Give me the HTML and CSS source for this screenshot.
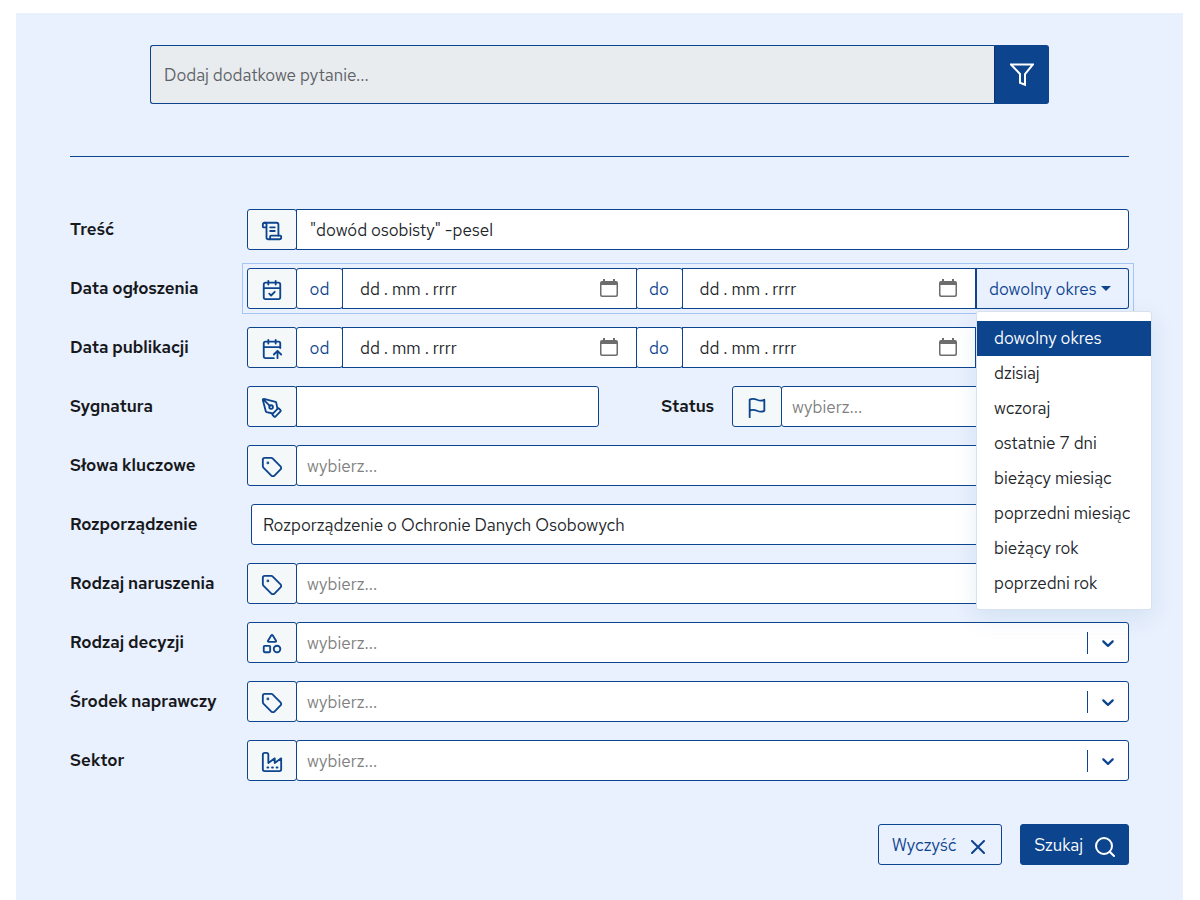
FILE: index.html
```
<!DOCTYPE html>
<html lang="pl">
<head>
<meta charset="utf-8">
<meta name="viewport" content="width=device-width, initial-scale=1">
<title>Wyszukiwarka</title>
<link rel="stylesheet" href="styles.css">
</head>
<body>

<svg class="sprite" aria-hidden="true">
	<symbol id="i-tag" viewBox="0 0 24 24">
		<path d="M12.6 2.6A2 2 0 0 0 11.2 2H4a2 2 0 0 0-2 2v7.2a2 2 0 0 0 .6 1.4l8.7 8.7a2.4 2.4 0 0 0 3.4 0l6.6-6.6a2.4 2.4 0 0 0 0-3.4z"/>
		<circle cx="7.5" cy="7.5" r=".5" fill="currentColor"/>
	</symbol>
	<symbol id="i-cal" viewBox="0 0 18 18">
		<path fill="currentColor" d="M3 0h2v2h8V0h2v2h1a2 2 0 0 1 2 2v12a2 2 0 0 1-2 2H2a2 2 0 0 1-2-2V4a2 2 0 0 1 2-2h1zM1.500 6v9.500a1 1 0 0 0 1 1h13a1 1 0 0 0 1-1V6z"/>
	</symbol>
	<symbol id="i-down" viewBox="0 0 20 20">
		<path fill="currentColor" d="M4.516 7.548c0.436-0.446 1.043-0.481 1.576 0l3.908 3.747 3.908-3.747c0.533-0.481 1.141-0.446 1.574 0 0.436 0.445 0.408 1.197 0 1.615-0.406 0.418-4.695 4.502-4.695 4.502-0.217 0.223-0.502 0.335-0.787 0.335s-0.570-0.112-0.789-0.335c0 0-4.287-4.084-4.695-4.502s-0.436-1.170 0-1.615z"/>
	</symbol>
</svg>

<main class="panel">
<form>
	<div class="ask">
		<input class="ask-input" type="text" placeholder="Dodaj dodatkowe pytanie..." aria-label="Dodatkowe pytanie" disabled>
		<button class="ask-btn" type="button" aria-label="Filtruj">
			<svg viewBox="0 0 24 24"><path d="M1 1.500h22L15 11v10.800l-5-2V11z"/></svg>
		</button>
	</div>

	<hr class="line">

	<div class="row">
		<label class="name" for="tresc">Treść</label>
		<div class="group">
			<span class="addon"><svg viewBox="0 0 24 24"><path d="M15 12h-5M15 8h-5M19 17V5a2 2 0 0 0-2-2H4"/><path d="M8 21h12a2 2 0 0 0 2-2v-1a1 1 0 0 0-1-1H11a1 1 0 0 0-1 1v1a2 2 0 1 1-4 0V5a2 2 0 1 0-4 0v2a1 1 0 0 0 1 1h3"/></svg></span>
			<input class="field" id="tresc" type="text" value="&quot;dowód osobisty&quot; -pesel">
		</div>
	</div>

	<div class="row">
		<span class="name" id="ogl">Data ogłoszenia</span>
		<div class="group active" role="group" aria-labelledby="ogl">
			<span class="addon"><svg viewBox="0 0 24 24"><path d="M8 2v4M16 2v4M3 10h18M9 16l2 2 4-4"/><rect x="3" y="4" width="18" height="18" rx="2"/></svg></span>
			<label class="prefix" for="ogl-od">od</label>
			<div class="date">
				<input id="ogl-od" type="text" placeholder="dd . mm . rrrr">
				<button type="button" aria-label="Wybierz datę"><svg><use href="#i-cal"/></svg></button>
			</div>
			<label class="prefix" for="ogl-do">do</label>
			<div class="date">
				<input id="ogl-do" type="text" placeholder="dd . mm . rrrr">
				<button type="button" aria-label="Wybierz datę"><svg><use href="#i-cal"/></svg></button>
			</div>
			<div class="period">
				<button class="period-btn" type="button" aria-expanded="true">dowolny okres</button>
				<div class="menu">
					<button class="item selected" type="button">dowolny okres</button>
					<button class="item" type="button">dzisiaj</button>
					<button class="item" type="button">wczoraj</button>
					<button class="item" type="button">ostatnie 7 dni</button>
					<button class="item" type="button">bieżący miesiąc</button>
					<button class="item" type="button">poprzedni miesiąc</button>
					<button class="item" type="button">bieżący rok</button>
					<button class="item" type="button">poprzedni rok</button>
				</div>
			</div>
		</div>
	</div>

	<div class="row">
		<span class="name" id="pub">Data publikacji</span>
		<div class="group" role="group" aria-labelledby="pub">
			<span class="addon"><svg viewBox="0 0 24 24"><path d="M8 2v4M16 2v4M3 10h18M18 22v-8M14 18l4-4 4 4"/><path d="M21 11V6a2 2 0 0 0-2-2H5a2 2 0 0 0-2 2v14a2 2 0 0 0 2 2h9"/></svg></span>
			<label class="prefix" for="pub-od">od</label>
			<div class="date">
				<input id="pub-od" type="text" placeholder="dd . mm . rrrr">
				<button type="button" aria-label="Wybierz datę"><svg><use href="#i-cal"/></svg></button>
			</div>
			<label class="prefix" for="pub-do">do</label>
			<div class="date">
				<input id="pub-do" type="text" placeholder="dd . mm . rrrr">
				<button type="button" aria-label="Wybierz datę"><svg><use href="#i-cal"/></svg></button>
			</div>
			<div class="period">
				<button class="period-btn" type="button" aria-expanded="false" aria-label="Okres publikacji"></button>
			</div>
		</div>
	</div>

	<div class="row">
		<label class="name" for="sygn">Sygnatura</label>
		<div class="group short">
			<span class="addon"><svg viewBox="0 0 24 24"><path d="M15.700 21.300a1 1 0 0 1-1.400 0l-1.600-1.600a1 1 0 0 1 0-1.400l5.600-5.600a1 1 0 0 1 1.400 0l1.600 1.600a1 1 0 0 1 0 1.400z"/><path d="M18 13l-1.400-6.900a1 1 0 0 0-.7-.8L3.200 2a1 1 0 0 0-1.200 1.200l3.300 12.700a1 1 0 0 0 .8.700L13 18M2.300 2.300l7.300 7.300"/><circle cx="11" cy="11" r="2"/></svg></span>
			<input class="field" id="sygn" type="text">
		</div>
		<label class="name status" for="status">Status</label>
		<div class="group">
			<span class="addon"><svg viewBox="0 0 24 24"><path d="M4 15s1-1 4-1 5 2 8 2 4-1 4-1V3s-1 1-4 1-5-2-8-2-4 1-4 1zM4 22v-7"/></svg></span>
			<div class="select">
				<select id="status"><option>wybierz...</option></select>
				<span class="arrow"><svg><use href="#i-down"/></svg></span>
			</div>
		</div>
	</div>

	<div class="row">
		<label class="name" for="slowa">Słowa kluczowe</label>
		<div class="group">
			<span class="addon"><svg><use href="#i-tag"/></svg></span>
			<div class="select">
				<select id="slowa"><option>wybierz...</option></select>
				<span class="arrow"><svg><use href="#i-down"/></svg></span>
			</div>
		</div>
	</div>

	<div class="row">
		<label class="name" for="rozp">Rozporządzenie</label>
		<div class="group alone">
			<div class="select filled">
				<select id="rozp"><option>Rozporządzenie o Ochronie Danych Osobowych</option></select>
			</div>
		</div>
	</div>

	<div class="row">
		<label class="name" for="narusz">Rodzaj naruszenia</label>
		<div class="group">
			<span class="addon"><svg><use href="#i-tag"/></svg></span>
			<div class="select">
				<select id="narusz"><option>wybierz...</option></select>
				<span class="arrow"><svg><use href="#i-down"/></svg></span>
			</div>
		</div>
	</div>

	<div class="row">
		<label class="name" for="decyzja">Rodzaj decyzji</label>
		<div class="group">
			<span class="addon"><svg viewBox="0 0 24 24"><path d="M11.300 2.500a.8.8 0 0 1 1.400 0l3.700 6a.8.8 0 0 1-.7 1.200H8.300a.8.8 0 0 1-.7-1.200z"/><rect x="3" y="14" width="7" height="7" rx="1"/><circle cx="17.500" cy="17.500" r="3.600"/></svg></span>
			<div class="select">
				<select id="decyzja"><option>wybierz...</option></select>
				<span class="arrow"><svg><use href="#i-down"/></svg></span>
			</div>
		</div>
	</div>

	<div class="row">
		<label class="name" for="srodek">Środek naprawczy</label>
		<div class="group">
			<span class="addon"><svg><use href="#i-tag"/></svg></span>
			<div class="select">
				<select id="srodek"><option>wybierz...</option></select>
				<span class="arrow"><svg><use href="#i-down"/></svg></span>
			</div>
		</div>
	</div>

	<div class="row">
		<label class="name" for="sektor">Sektor</label>
		<div class="group">
			<span class="addon"><svg viewBox="0 0 24 24"><path d="M2 20a2 2 0 0 0 2 2h16a2 2 0 0 0 2-2V8l-7 5V8l-7 5V4a2 2 0 0 0-2-2H4a2 2 0 0 0-2 2zM17 18h1M12 18h1M7 18h1"/></svg></span>
			<div class="select">
				<select id="sektor"><option>wybierz...</option></select>
				<span class="arrow"><svg><use href="#i-down"/></svg></span>
			</div>
		</div>
	</div>

	<div class="buttons">
		<button class="btn" type="reset">Wyczyść <svg class="x" viewBox="0 0 14 14"><path d="M1 1l12 12M13 1L1 13"/></svg></button>
		<button class="btn primary" type="submit">Szukaj <svg viewBox="0 0 20 20"><circle cx="9" cy="9" r="8"/><path d="M14.700 14.700l4.300 4.300"/></svg></button>
	</div>
</form>
</main>

</body>
</html>
```
FILE: styles.css
```
* {box-sizing:border-box;}
body {margin:0; background:#fff; color:#212529; font:17px/24px "Red Hat Text", Inter, "Noto Sans", sans-serif;}
input, select, button {font:inherit; color:inherit; margin:0; padding:0; border:0; border-radius:0; background:none; min-width:0;}
button {cursor:pointer;}
svg {display:block; fill:none; stroke:currentColor; stroke-width:2; stroke-linecap:round; stroke-linejoin:round;}
.sprite {position:absolute; width:0; height:0;}

.panel {margin:13px 17px 0 16px; min-height:calc(100vh - 13px); padding:32px 54px 35px; background:#e9f0fe;}

/* extra question */
.ask {display:flex; height:59px; margin:0 80px;}
.ask-input {flex:1; padding:0 13px; border:1px solid #0d448e; border-right:0; border-radius:3px 0 0 3px; background:#e8ecee;}
.ask-input::placeholder {color:#5c6166; opacity:1;}
.ask-btn {display:flex; align-items:center; justify-content:center; width:55px; border:1px solid #0d448e; border-left-color:#08336e; border-radius:0 3px 3px 0; background:#0d448e; color:#fff;}
.ask-btn svg {width:24px; height:24px; stroke-linejoin:miter;}

.line {height:1px; margin:52px 0; border:0; background:#0d448e;}

/* form rows */
.row {display:flex; margin-bottom:18px;}
.name {flex:0 0 177px; padding-top:8px; font-weight:600; color:#16181b;}
.status {flex-basis:133px; padding-right:18px; text-align:right;}
.group {display:flex; flex:1; height:41px; min-width:0;}
.group > * + * {margin-left:-1px;}
.short {flex:0 0 352px;}
.alone {margin-left:4px;}
.active {outline:1px solid #a3c6f5; outline-offset:4px;}

.addon {display:flex; align-items:center; justify-content:center; flex:0 0 50px; padding-top:3px; border:1px solid #0d448e; border-radius:3px; background:#f4f8f9; color:#0d448e;}
.addon svg {width:22px; height:22px;}
.prefix {flex:0 0 47px; border:1px solid #0d448e; border-radius:3px; background:#fff; color:#0d448e; line-height:40px; text-align:center;}
.field {flex:1; padding:0 13px; border:1px solid #0d448e; border-radius:0 3px 3px 0; background:#fff;}

.date {display:flex; align-items:center; flex:1; min-width:0; padding:0 18px 0 17px; border:1px solid #0d448e; background:#fff;}
.date input {flex:1; height:39px;}
.date input::placeholder {color:#212529; opacity:1;}
.date button {padding-bottom:2px; color:#6d6d6d;}
.date svg {width:18px; height:18px; stroke:none;}

/* period drop-down */
.period {position:relative; flex:0 0 154px;}
.period-btn {display:flex; align-items:center; gap:5px; width:100%; height:100%; padding:0 12px; border:1px solid #0d448e; border-left-width:2px; border-radius:0 3px 3px 0; background:#e9f0fe; color:#0d448e; white-space:nowrap;}
.period-btn::after {content:""; border:5px solid transparent; border-top-color:#0d448e; border-bottom:0;}
.menu {position:absolute; z-index:10; top:100%; right:-23px; min-width:176px; margin-top:2px; padding:9px 0 8px; border:1px solid #d9e0ee; border-radius:3px; background:#fff; box-shadow:0 8px 24px rgba(13, 100, 142, .1);}
.item {display:block; width:100%; padding:0 17px; line-height:35px; text-align:left; white-space:nowrap;}
.item:hover {background:#e9f0fe;}
.selected, .selected:hover {background:#0d448e; color:#fff;}

/* selects */
.select {display:grid; flex:1; min-width:0; border:1px solid #0d448e; border-radius:3px; background:#fff;}
.select select {grid-area:1/1; appearance:none; padding:0 50px 0 10px; color:gray;}
.filled select {padding-left:11px; color:#212529;}
.arrow {grid-area:1/1; justify-self:end; align-self:center; padding:0 10px; border-left:1px solid #0d448e; color:#0d448e; pointer-events:none;}
.arrow svg {width:20px; height:22px; stroke:none;}

.buttons {display:flex; justify-content:flex-end; gap:18px; margin-top:43px;}
.btn {display:flex; align-items:center; gap:12px; height:41px; padding:0 13px; border:1px solid #0d448e; border-radius:3px; color:#0d448e;}
.btn svg {width:20px; height:20px; margin-top:4px;}
.btn .x {width:14px; height:14px; margin:4px 3px 0;}
.primary {background:#0d448e; color:#fff;}
```
